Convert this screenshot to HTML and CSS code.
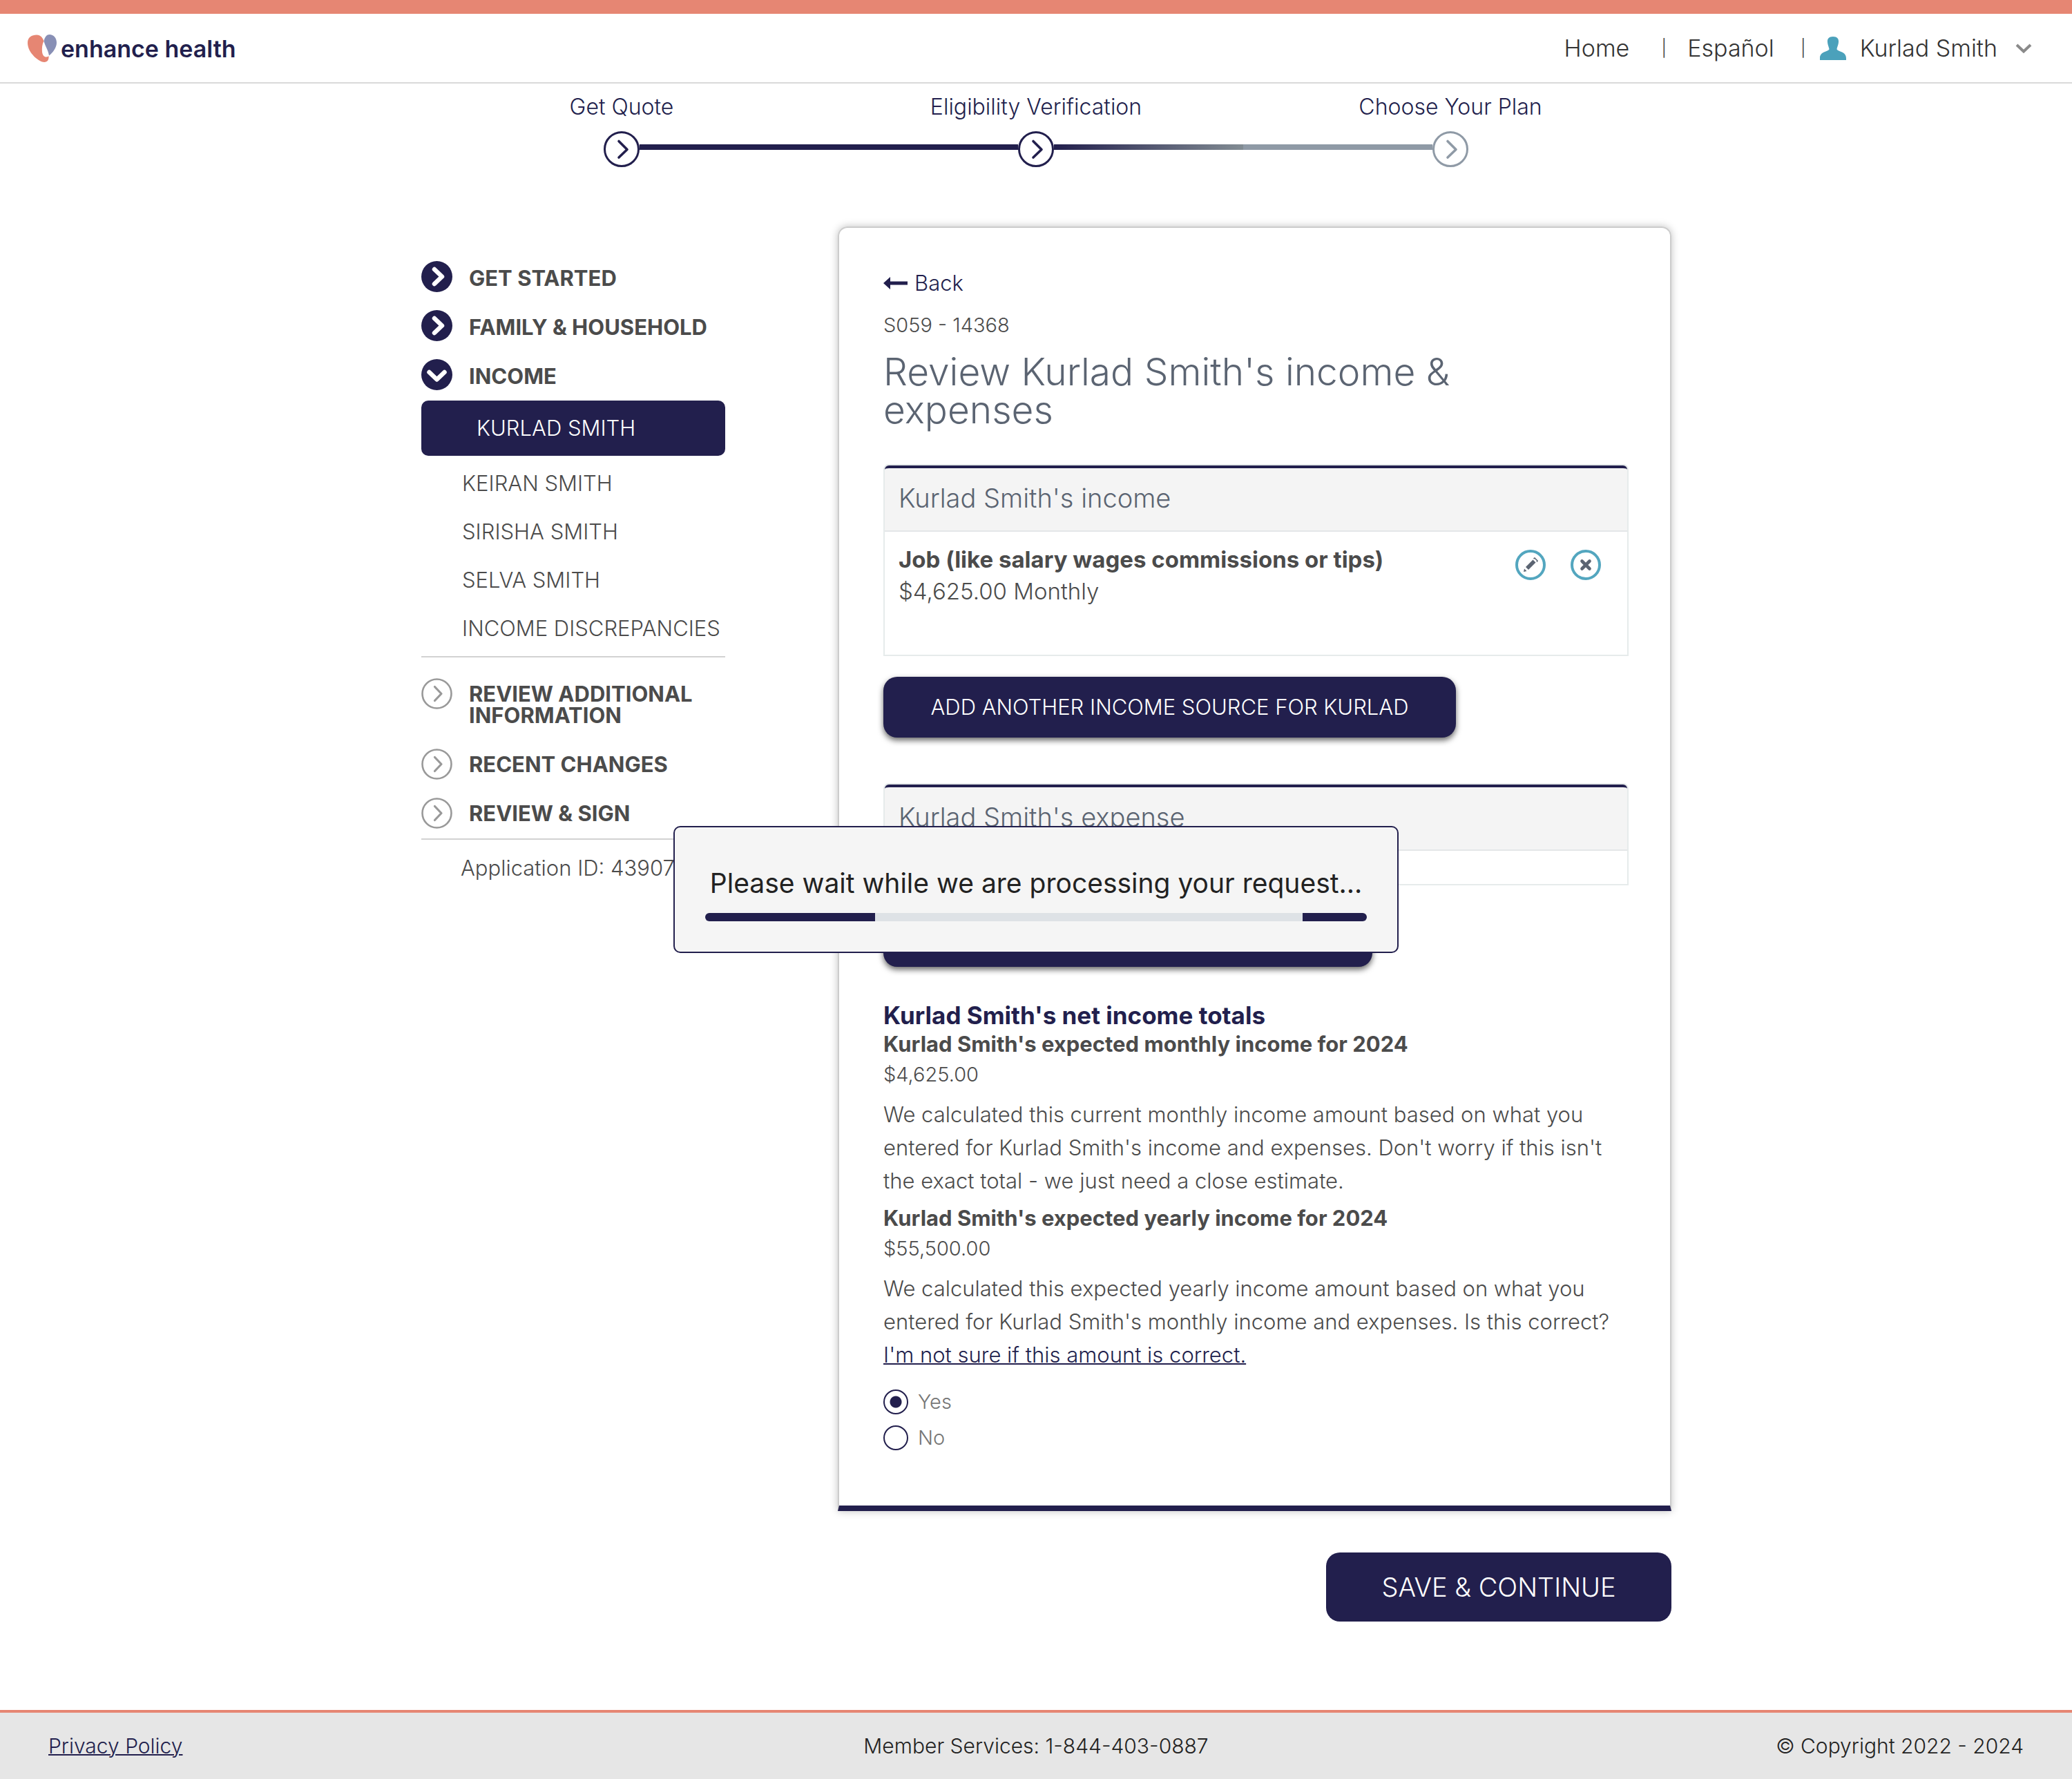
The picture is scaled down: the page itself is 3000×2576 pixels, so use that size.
FILE: index.html
```html
<!DOCTYPE html>
<html lang="en">
<head>
<meta charset="utf-8">
<meta name="viewport" content="width=device-width, initial-scale=1">
<title>Review income &amp; expenses - enhance health</title>
<link rel="stylesheet" href="styles.css">
</head>
<body>
<svg class="sprite" aria-hidden="true">
  <symbol id="step-open" viewBox="0 0 52 52"><circle cx="26" cy="26" r="24.5" fill="#fff" stroke="currentColor" stroke-width="3"/><path d="M22 14.500L34 26.500L22 38" fill="none" stroke="currentColor" stroke-width="3.600" stroke-linecap="round" stroke-linejoin="round"/></symbol>
  <symbol id="nav-done" viewBox="0 0 45 45"><circle cx="22.500" cy="22.500" r="22.500" fill="#221f4d"/><path d="M19 12L30 22.500L19 33" fill="none" stroke="#fff" stroke-width="6.500" stroke-linecap="round" stroke-linejoin="round"/></symbol>
  <symbol id="nav-current" viewBox="0 0 45 45"><circle cx="22.500" cy="22.500" r="22.500" fill="#221f4d"/><path d="M11.500 19L22.500 29.500L33.500 19" fill="none" stroke="#fff" stroke-width="6.500" stroke-linecap="round" stroke-linejoin="round"/></symbol>
  <symbol id="nav-todo" viewBox="0 0 45 45"><circle cx="22.500" cy="22.500" r="21" fill="#fff" stroke="#999" stroke-width="2.600"/><path d="M19.500 12.500L29 22.500L19.500 32.500" fill="none" stroke="#999" stroke-width="3.200" stroke-linecap="round" stroke-linejoin="round"/></symbol>
</svg>

<header class="site-header">
  <a class="brand" href="#">
    <svg class="brand-mark" viewBox="0 0 42 40" aria-hidden="true">
      <path d="M0 12C0 4 6 .5 13 .5C19 .5 22 5 23.500 9.500C21 14 20.500 20 21 25C21.500 30 24 32.500 27 32.500C29 32.500 30 31.500 30.500 31C31 36 29 40 24 40C17 40 0 27 0 12Z" fill="#e68673"/>
      <path d="M23.500 9.500C25 3 28 0 31.500 0C38 0 42 5 42 12C42 19 36 27 31 30.500C30 23 25.500 17 23.500 9.500Z" fill="#888fb5"/>
    </svg>
    <span class="brand-name">enhance health</span>
  </a>
  <nav class="top-nav">
    <a class="top-link home" href="#">Home</a>
    <span class="bar">|</span>
    <a class="top-link lang" href="#">Español</a>
    <span class="bar">|</span>
    <button class="user-menu" type="button">
      <svg class="user-icon" viewBox="0 0 38 34" aria-hidden="true"><path d="M19 0C25 0 27.500 3 27 8C26.500 13 25 15 24.500 18C25 22 38 21 38 31V34H0V31C0 21 13 22 13.500 18C13 15 11.500 13 11 8C10.500 3 13 0 19 0Z" fill="#4ba1bb"/></svg>
      <span>Kurlad Smith</span>
      <svg class="chevron" viewBox="0 0 24 14" aria-hidden="true"><path d="M2 2L12 11.500L22 2" fill="none" stroke="#8a8a8a" stroke-width="4"/></svg>
    </button>
  </nav>
</header>

<ol class="stepper">
  <li class="step">
    <span class="step-label">Get Quote</span>
    <div class="step-track"><span class="line none"></span><svg class="step-icon"><use href="#step-open"/></svg><span class="line"></span></div>
  </li>
  <li class="step">
    <span class="step-label">Eligibility Verification</span>
    <div class="step-track"><span class="line"></span><svg class="step-icon"><use href="#step-open"/></svg><span class="line fade"></span></div>
  </li>
  <li class="step upcoming">
    <span class="step-label">Choose Your Plan</span>
    <div class="step-track"><span class="line"></span><svg class="step-icon"><use href="#step-open"/></svg><span class="line none"></span></div>
  </li>
</ol>

<div class="layout">
  <aside class="sidebar">
    <ul class="sections">
      <li><a class="section" href="#"><svg class="section-icon"><use href="#nav-done"/></svg><span class="section-name">GET STARTED</span></a></li>
      <li><a class="section" href="#"><svg class="section-icon"><use href="#nav-done"/></svg><span class="section-name">FAMILY &amp; HOUSEHOLD</span></a></li>
      <li><a class="section" href="#"><svg class="section-icon"><use href="#nav-current"/></svg><span class="section-name">INCOME</span></a></li>
    </ul>
    <a class="current-page" href="#" aria-current="page">KURLAD SMITH</a>
    <ul class="pages">
      <li><a href="#">KEIRAN SMITH</a></li>
      <li><a href="#">SIRISHA SMITH</a></li>
      <li><a href="#">SELVA SMITH</a></li>
      <li><a href="#">INCOME DISCREPANCIES</a></li>
    </ul>
    <ul class="sections remaining">
      <li><a class="section" href="#"><svg class="section-icon"><use href="#nav-todo"/></svg><span class="section-name">REVIEW ADDITIONAL INFORMATION</span></a></li>
      <li><a class="section" href="#"><svg class="section-icon"><use href="#nav-todo"/></svg><span class="section-name">RECENT CHANGES</span></a></li>
      <li><a class="section" href="#"><svg class="section-icon"><use href="#nav-todo"/></svg><span class="section-name">REVIEW &amp; SIGN</span></a></li>
    </ul>
    <p class="application-id">Application ID: 43907</p>
  </aside>

  <main class="content">
    <section class="card">
      <a class="back" href="#">
        <svg class="back-arrow" viewBox="0 0 35 18" aria-hidden="true"><path d="M0 9L10 0V6.500H35V11.500H10V18Z" fill="#221f4d"/></svg>
        Back
      </a>
      <p class="page-code">S059 - 14368</p>
      <h1 class="title">Review Kurlad Smith's income &amp; expenses</h1>

      <section class="panel">
        <h2 class="panel-head">Kurlad Smith's income</h2>
        <div class="panel-row">
          <div class="source">
            <p class="source-name">Job (like salary wages commissions or tips)</p>
            <p>$4,625.00 Monthly</p>
          </div>
          <div class="actions">
            <button class="icon-button" type="button" aria-label="Edit">
              <svg viewBox="0 0 44 44" aria-hidden="true"><circle cx="22" cy="22" r="20" fill="#fff" stroke="#53a6bf" stroke-width="4"/><path d="M15 25L25.500 14.500L29.500 18.500L19 29Z" fill="#5b6472"/><path d="M26.500 13L28 12L32 16L31 17.500" fill="none" stroke="#5b6472" stroke-width="1.600"/><path d="M13 27.500L16.500 31L12 32Z" fill="#5b6472"/></svg>
            </button>
            <button class="icon-button" type="button" aria-label="Remove">
              <svg viewBox="0 0 44 44" aria-hidden="true"><circle cx="22" cy="22" r="20" fill="#fff" stroke="#53a6bf" stroke-width="4"/><path d="M16.500 16.500L27.500 27.500M27.500 16.500L16.500 27.500" stroke="#5b6472" stroke-width="4.600" stroke-linecap="round"/></svg>
            </button>
          </div>
        </div>
      </section>
      <button class="add-button income" type="button">ADD ANOTHER INCOME SOURCE FOR KURLAD</button>

      <section class="panel expenses">
        <h2 class="panel-head">Kurlad Smith's expense</h2>
        <div class="panel-empty"></div>
      </section>
      <button class="add-button expense" type="button">ADD ANOTHER EXPENSE FOR KURLAD</button>

      <section class="totals">
        <h2 class="totals-title">Kurlad Smith's net income totals</h2>
        <h3 class="total-name">Kurlad Smith's expected monthly income for 2024</h3>
        <p class="amount">$4,625.00</p>
        <p class="note">We calculated this current monthly income amount based on what you entered for Kurlad Smith's income and expenses. Don't worry if this isn't the exact total - we just need a close estimate.</p>
        <h3 class="total-name">Kurlad Smith's expected yearly income for 2024</h3>
        <p class="amount">$55,500.00</p>
        <p class="note">We calculated this expected yearly income amount based on what you entered for Kurlad Smith's monthly income and expenses. Is this correct? <a class="help-link" href="#">I'm not sure if this amount is correct.</a></p>
      </section>
      <div class="answers" role="radiogroup" aria-label="Is this correct?">
        <label class="answer"><input class="radio" type="radio" name="correct" value="yes" checked>Yes</label>
        <label class="answer"><input class="radio" type="radio" name="correct" value="no">No</label>
      </div>
    </section>
    <button class="save-button" type="submit">SAVE &amp; CONTINUE</button>
  </main>
</div>

<footer class="site-footer">
  <a class="privacy" href="#">Privacy Policy</a>
  <span>Member Services: 1-844-403-0887</span>
  <span class="copyright">© Copyright 2022 - 2024</span>
</footer>

<div class="loading" role="dialog" aria-label="Processing">
  <p class="loading-text">Please wait while we are processing your request...</p>
  <div class="loading-bar" role="progressbar" aria-label="Processing"></div>
</div>
</body>
</html>
```
FILE: styles.css
```css
:root {
  --navy: #221f4d;
  --coral: #e68673;
  --text: #4b4b4b;
  --slate: #5b6472;
  --rule: #d2d2d2;
  --small: 29px;
  --base: 31px;
}

* { box-sizing: border-box; }

body {
  margin: 0;
  min-height: 100vh;
  display: flex;
  flex-direction: column;
  background: #fff;
  color: var(--text);
  font-family: Inter, "Open Sans", sans-serif;
  font-size: var(--base);
  font-weight: 300;
  line-height: 34px;
}

h1, h2, h3, p, ul, ol { margin: 0; padding: 0; font-weight: inherit; }
ul, ol { list-style: none; }
a { color: inherit; text-decoration: none; }
button { font: inherit; border: 0; padding: 0; background: none; color: inherit; cursor: pointer; }
.sprite { display: none; }

/* Header */
.site-header {
  display: flex;
  align-items: center;
  justify-content: space-between;
  height: 121px;
  padding: 0 58px 0 40px;
  border-top: 20px solid var(--coral);
  border-bottom: 2px solid #d9d9d9;
  color: #333;
}
.brand { display: flex; align-items: center; gap: 6px; color: var(--navy); }
.brand-mark { width: 42px; height: 40px; }
.brand-name { font-size: 34px; font-weight: 600; line-height: 40px; padding-top: 2px; }
.top-nav { display: flex; align-items: center; font-size: 34px; }
.bar { width: 8px; font-size: 24px; text-align: center; }
.home { margin-right: 46px; }
.lang { margin: 0 38px 0 30px; }
.user-menu { display: flex; align-items: center; gap: 20px; margin-left: 20px; }
.user-icon { width: 38px; height: 34px; }
.chevron { width: 24px; height: 14px; margin-left: 6px; }

/* Progress through the application */
.stepper {
  display: grid;
  grid-template-columns: repeat(3, 1fr);
  width: 100%;
  max-width: 1800px;
  margin: 0 auto;
  padding: 17px 0 86px;
  color: var(--navy);
  font-size: 32px;
}
.step { text-align: center; }
.step-track { display: flex; align-items: center; margin-top: 18px; }
.step-label { display: block; }
.step-icon { width: 52px; height: 52px; }
.line { flex: 1; height: 8px; margin-bottom: 6px; background: var(--navy); }
.line.none { background: none; }
.line.fade { background: linear-gradient(90deg, var(--navy), #828c93); }
.upcoming .line:not(.none) { background: #8f9aa6; }
.upcoming .step-icon { color: #8f9aa6; }

/* Page columns */
.layout {
  display: grid;
  grid-template-columns: 440px 1fr;
  gap: 163px;
  width: 100%;
  max-width: 1840px;
  margin: 0 auto;
  padding: 0 0 126px 30px;
}

/* Sidebar */
.sidebar { padding-top: 50px; }
.sections { display: grid; gap: 26px; }
.section { display: grid; grid-template-columns: 45px 1fr; gap: 24px; }
.section-icon { width: 45px; height: 45px; }
.section-name { padding: 9px 0 5px; font-weight: 700; line-height: 31px; }
.current-page {
  display: block;
  margin-top: 15px;
  padding: 0 80px;
  border-radius: 10px;
  background: var(--navy);
  color: #fff;
  line-height: 80px;
}
.pages { padding: 5px 0 5px 59px; border-bottom: 2px solid var(--rule); line-height: 70px; white-space: nowrap; }
.remaining { padding: 30px 0 14px; border-bottom: 2px solid var(--rule); }
.remaining .section-name { padding: 7px 0; }
.application-id { padding: 24px 0 0 57px; }

/* Main card */
.content { display: flex; flex-direction: column; align-items: stretch; }
.card {
  padding: 63px 60px 80px 64px;
  border: 2px solid #ccc;
  border-bottom: 8px solid var(--navy);
  border-radius: 14px 14px 0 0;
  box-shadow: 0 0 12px rgba(0, 0, 0, .25);
}
.back { display: flex; align-items: center; gap: 10px; width: fit-content; color: var(--navy); }
.back-arrow { width: 35px; height: 18px; }
.page-code { margin-top: 27px; font-size: var(--small); }
.title { margin: 23px 0 51px; padding-right: 80px; color: var(--slate); font-size: 55px; line-height: 55px; }

.panel { border: 2px solid #e6ebeb; border-radius: 8px 8px 0 0; }
.panel-head {
  padding: 23px 20px 27px;
  border-top: 4px solid var(--navy);
  border-bottom: 2px solid #e4e6e8;
  border-radius: 6px 6px 0 0;
  background: #f4f4f4;
  color: var(--slate);
  font-size: 38px;
  line-height: 40px;
}
.panel-row { display: flex; justify-content: space-between; padding: 17px 38px 69px 20px; font-size: 33px; line-height: 46px; }
.source-name { font-weight: 700; }
.actions { display: flex; gap: 36px; padding-top: 9px; }
.icon-button { width: 44px; height: 44px; }
.icon-button svg { display: block; }
.panel-empty { height: 48px; }
.expenses { margin-top: 66px; }

.add-button {
  display: block;
  height: 88px;
  margin-top: 30px;
  border-radius: 20px;
  background: var(--navy);
  color: #fff;
  box-shadow: 0 4px 8px rgba(0, 0, 0, .6);
}
.income { width: 829px; }
.expense { width: 708px; }

/* Totals */
.totals { margin-top: 50px; line-height: 44px; }
.totals-title { color: var(--navy); font-size: 35px; font-weight: 700; line-height: 40px; }
.total-name { font-size: var(--base); font-weight: 700; }
.amount { font-size: var(--small); }
.note { margin: 12px 0 8px; line-height: 48px; }
.help-link { display: block; color: var(--navy); text-decoration: underline; text-decoration-thickness: 2px; }

.answers { display: grid; gap: 16px; padding-top: 18px; color: #767676; font-size: var(--small); }
.answer { display: flex; align-items: center; gap: 14px; height: 36px; }
.radio {
  appearance: none;
  width: 36px;
  height: 36px;
  margin: 0;
  border: 2px solid var(--navy);
  border-radius: 50%;
}
.radio:checked { background: radial-gradient(circle, var(--navy) 8px, #fff 9px); }

.save-button {
  align-self: flex-end;
  width: 500px;
  height: 100px;
  margin-top: 60px;
  border-radius: 20px;
  background: var(--navy);
  color: #fff;
  font-size: 38px;
}

/* Footer */
.site-footer {
  display: grid;
  grid-template-columns: 1fr auto 1fr;
  align-items: center;
  height: 100px;
  margin-top: auto;
  padding: 0 70px;
  border-top: 4px solid var(--coral);
  background: #e6e6e6;
  color: #222;
  font-size: 30px;
}
.privacy { justify-self: start; color: var(--navy); text-decoration: underline; text-decoration-thickness: 2px; }
.copyright { justify-self: end; }

/* Loading message, centred over the page */
.loading {
  position: fixed;
  top: 50%;
  left: 50%;
  width: 1050px;
  padding: 58px 44px 44px;
  transform: translate(-50%, -50%);
  border: 2px solid var(--navy);
  border-radius: 10px;
  background: #f5f5f5;
  color: #222;
}
.loading-text { font-size: 39px; font-weight: 400; line-height: 46px; text-align: center; white-space: nowrap; }
.loading-bar {
  height: 12px;
  margin-top: 20px;
  border-radius: 6px;
  background: linear-gradient(90deg, var(--navy) 246px, #dee2e6 246px 865px, var(--navy) 865px);
}
```
